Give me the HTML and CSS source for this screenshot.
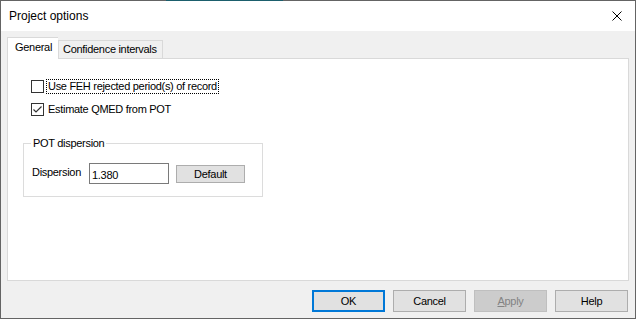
FILE: index.html
```html
<!DOCTYPE html>
<html>

<head lang="en">
  <meta charset="UTF-8">
  <title>Project options</title>
  <link rel="stylesheet" href="styles.css">
</head>

<body>
  <div class="dialog">
    <div class="dialog-edge"></div>
    <div class="dialog-title">
      <span>Project options</span>
      <a class="dialog-close" href="javascript:void(0);">
        <svg width="10" height="10" viewBox="0 0 10 10">
          <path d="M0.5 0.5L9.5 9.5M9.5 0.5L0.5 9.5" stroke="#000" stroke-width="1" fill="none" />
        </svg>
      </a>
    </div>
    <div class="dialog-body">
      <div class="tabs">
        <div class="tab tab-active">General</div>
        <div class="tab">Confidence intervals</div>
      </div>
      <div class="tab-panel">
        <label class="check-row">
          <span class="check-box"></span>
          <span class="check-text check-focus">Use FEH rejected period(s) of record</span>
        </label>
        <label class="check-row">
          <span class="check-box">
            <svg width="11" height="11" viewBox="0 0 11 11">
              <path d="M1.5 5.5L4 8L9.5 2.5" stroke="#333" stroke-width="1.2" fill="none" />
            </svg>
          </span>
          <span class="check-text">Estimate QMED from POT</span>
        </label>
        <fieldset class="group">
          <legend>POT dispersion</legend>
          <div class="group-row">
            <span class="group-label">Dispersion</span>
            <input class="text-input" type="text" value="1.380">
            <button class="btn btn-small">Default</button>
          </div>
        </fieldset>
      </div>
      <div class="buttons">
        <button class="btn btn-default">OK</button>
        <button class="btn">Cancel</button>
        <button class="btn btn-disabled"><u>A</u>pply</button>
        <button class="btn">Help</button>
      </div>
    </div>
  </div>
</body>

</html>
```

FILE: styles.css
```css
html,
body {
  margin: 0px;
  padding: 0px;
}

body {
  font-family: "Liberation Sans", Arial, sans-serif;
  font-size: 11px;
  letter-spacing: -0.3px;
  color: #000000;
}

.dialog {
  width: 636px;
  height: 319px;
  box-sizing: border-box;
  border: #646464 solid 1px;
  border-top: none;
  background: #f0f0f0;
  display: flex;
  flex-direction: column;
}

.dialog-edge {
  height: 1px;
  margin: 0px -1px;
  background: linear-gradient(to right, #646464 166px, #1b5e6c 166px, #1b5e6c 283px, #646464 283px);
}

.dialog-title {
  height: 30px;
  background: #ffffff;
  display: flex;
  align-items: center;
  justify-content: space-between;
  padding: 0px 13px 0px 8px;
  font-size: 12px;
  letter-spacing: 0px;
}

.dialog-title span {
  margin-top: -1px;
}

.dialog-close {
  display: flex;
  margin-top: -1px;
}

.dialog-body {
  flex: 1;
  display: flex;
  flex-direction: column;
  padding: 7px 6px 0px 6px;
}

.tabs {
  display: flex;
  align-items: flex-end;
  height: 20px;
  position: relative;
  z-index: 1;
}

.tab {
  height: 17px;
  line-height: 17px;
  padding: 0px 5px 0px 4px;
  border: #d9d9d9 solid 1px;
  border-bottom: none;
  background: #f0f0f0;
  white-space: nowrap;
}

.tab-active {
  height: 21px;
  line-height: 19px;
  padding: 0px 6px 0px 7px;
  background: #ffffff;
  margin-bottom: -1px;
  border-right: none;
}

.tab-active + .tab {
  border-left: #d9d9d9 solid 1px;
}

.tab-panel {
  height: 223px;
  box-sizing: border-box;
  border: #d9d9d9 solid 1px;
  background: #ffffff;
  padding: 21px 0px 0px 23px;
  display: flex;
  flex-direction: column;
  align-items: flex-start;
}

.check-row {
  display: flex;
  align-items: center;
  height: 13px;
  margin-bottom: 10px;
}

.check-box {
  width: 11px;
  height: 11px;
  border: #333333 solid 1px;
  background: #ffffff;
  display: flex;
}

.check-text {
  margin-left: 3px;
  padding: 0px 1px;
  line-height: 13px;
}

.check-focus {
  outline: #000000 dotted 1px;
}

.group {
  margin: 11px 0px 0px -8px;
  padding: 13px 0px 12px 8px;
  width: 240px;
  box-sizing: border-box;
  border: #dcdcdc solid 1px;
}

.group legend {
  padding: 0px 2px;
  margin-left: -1px;
  line-height: 13px;
}

.group-row {
  display: flex;
  align-items: center;
}

.group-label {
  width: 57px;
  margin-top: -3px;
}

.text-input {
  width: 80px;
  height: 21px;
  box-sizing: border-box;
  border: #7a7a7a solid 1px;
  padding: 2px 2px 0px 2px;
  font-family: "Liberation Sans", Arial, sans-serif;
  font-size: 11px;
  letter-spacing: -0.3px;
  margin: 0px;
  outline: none;
}

.buttons {
  display: flex;
  justify-content: flex-end;
  gap: 8px;
  padding: 9px 1px 0px 0px;
}

.btn {
  width: 73px;
  height: 22px;
  box-sizing: border-box;
  border: #adadad solid 1px;
  background: #e1e1e1;
  font-family: "Liberation Sans", Arial, sans-serif;
  font-size: 11px;
  letter-spacing: -0.3px;
  color: #000000;
  padding: 0px;
  margin: 0px;
}

.btn-small {
  width: 69px;
  height: 18px;
  margin-left: 7px;
}

.btn-default {
  border: #0078d7 solid 2px;
}

.btn-disabled {
  background: #cccccc;
  border-color: #bfbfbf;
  color: #838383;
}

.btn-disabled u {
  text-decoration: underline;
}
```
